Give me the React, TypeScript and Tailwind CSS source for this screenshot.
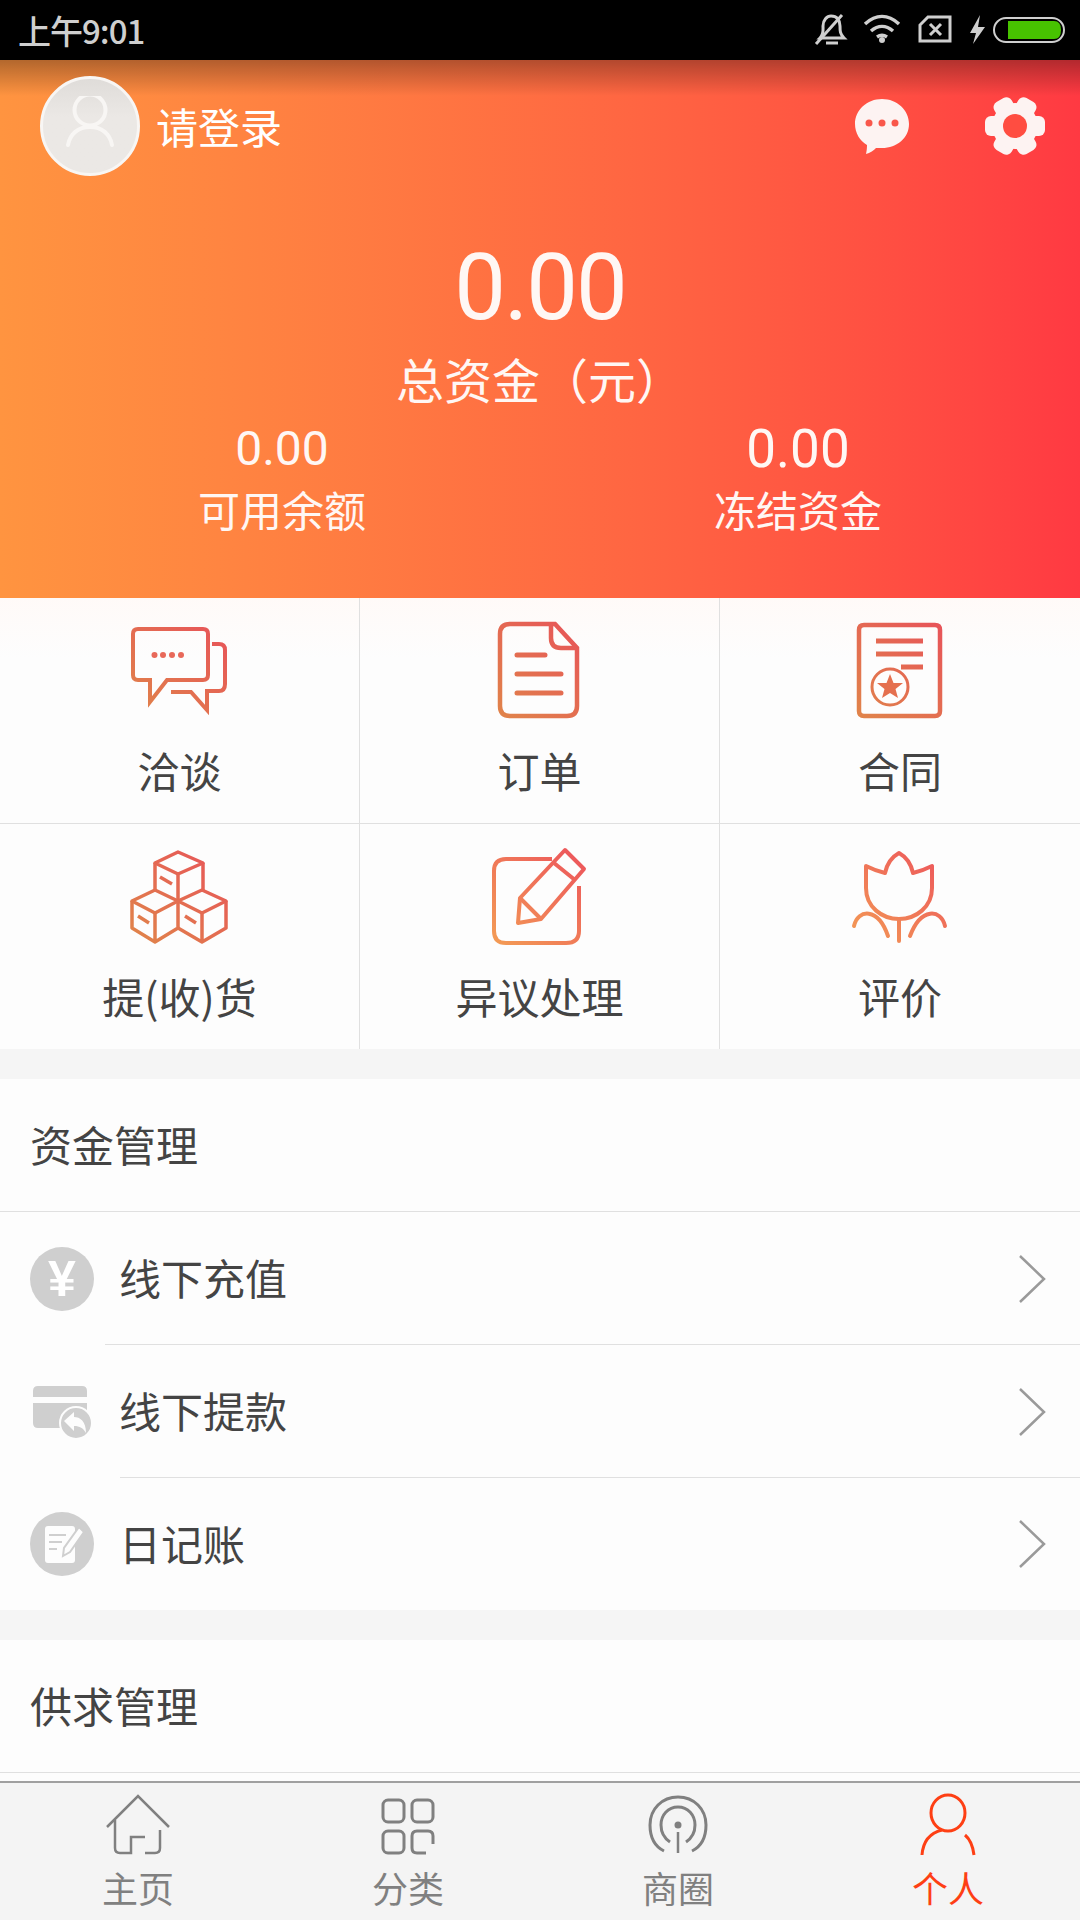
import type { ReactNode } from "react";

function GradIcon({ id, box, from = "#e0844a", to = "#e8505a", children }: { id: string; box: [number, number]; from?: string; to?: string; children: ReactNode }) {
  const [x, y] = box;
  return (
    <svg width="110" height="110" viewBox={`${x} ${y} 110 110`} fill="none" stroke={`url(#${id})`} strokeWidth="4">
      <defs>
        <linearGradient id={id} gradientUnits="userSpaceOnUse" x1={x + 10} y1={y + 105} x2={x + 100} y2={y + 5}>
          <stop offset="0" stopColor={from} />
          <stop offset="1" stopColor={to} />
        </linearGradient>
      </defs>
      {children}
    </svg>
  );
}

const cells = [
  {
    label: "洽谈",
    icon: (
      <GradIcon id="g1" box={[125, 610]}>
        <path d="M150 680H138Q133 680 133 675V634Q133 629 138 629H203Q208 629 208 634V675Q208 680 203 680H167L150 702Z" />
        <path d="M212 644H219Q225 644 225 650V684Q225 691 219 691H207V710L191 692H171" />
        <g fill="#e8695a" stroke="none">
          <circle cx="154.500" cy="655" r="3" />
          <circle cx="163" cy="655" r="3" />
          <circle cx="172" cy="655" r="3" />
          <circle cx="181" cy="655" r="3" />
        </g>
      </GradIcon>
    ),
  },
  {
    label: "订单",
    icon: (
      <GradIcon id="g2" box={[485, 610]}>
        <path d="M555 624H510Q500 624 500 634V706Q500 716 510 716H567Q577 716 577 706V648Z" strokeWidth="4.500" />
        <path d="M551 624V638Q551 648 561 648H577" strokeWidth="4.500" />
        <path d="M517 655H545M517 674H561M517 693H561" strokeWidth="5" strokeLinecap="round" />
      </GradIcon>
    ),
  },
  {
    label: "合同",
    icon: (
      <GradIcon id="g3" box={[845, 610]}>
        <path d="M864 625H935Q940 625 940 630V711Q940 716 935 716H864Q859 716 859 711V630Q859 625 864 625Z" strokeWidth="4.500" />
        <path d="M876 641H923M876 654H923M901 667H923" strokeWidth="5" />
        <circle cx="890" cy="687" r="18" strokeWidth="3" fill="#fefdfc" />
        <path d="M890 674L893.500 683H903L895.500 689L898 698L890 693L882 698L884.500 689L877 683H886.500Z" fill="#e5704e" stroke="none" />
      </GradIcon>
    ),
  },
  {
    label: "提(收)货",
    icon: (
      <GradIcon id="g4" box={[125, 835]}>
        <g strokeWidth="3.500" strokeLinejoin="round">
          <path d="M178 851L203 862L178 873L155 862Z" />
          <path d="M155 862V889M203 862V889M178 873V900" />
          <path d="M155 889L178 900L155 912L132 900Z" />
          <path d="M132 900V927L155 941L178 927V900M155 912V941" />
          <path d="M202 889L226 900L202 912L178 900Z" />
          <path d="M226 900V927L202 941L178 927M202 912V941" />
          <path d="M160 876L172 883M138 915L149 922M185 915L196 922" />
        </g>
      </GradIcon>
    ),
  },
  {
    label: "异议处理",
    icon: (
      <GradIcon id="g5" box={[485, 835]} from="#f39a55" to="#ec4f5c">
        <path d="M552 858H506Q494 858 494 870V930Q494 942 506 942H566Q579 942 579 930V885" />
        <path d="M565 849L584 868L541 918L518 922L520 897Z" strokeLinejoin="round" />
        <path d="M520 897L541 918M554 862L575 879" />
      </GradIcon>
    ),
  },
  {
    label: "评价",
    icon: (
      <GradIcon id="g6" box={[845, 835]} from="#f39a55" to="#ec4f5c">
        <path d="M899 852Q910 858 913 872Q922 870 932 865V887C932 906 916 918 899 918C882 918 866 906 866 887V865Q876 870 885 872Q888 858 899 852Z" strokeLinejoin="round" />
        <path d="M899 918V940M854 925C858 908 878 906 888 935M945 925C941 908 921 906 910 935" strokeLinecap="round" />
      </GradIcon>
    ),
  },
];

function Chevron() {
  return (
    <svg width="28" height="50" viewBox="0 0 28 50" fill="none" stroke="#9a9a9a" strokeWidth="2.500" className="ml-auto mr-[34px]">
      <path d="M2 2L26 25L2 48" />
    </svg>
  );
}

function FinanceRow({ label, icon, divider }: { label: string; icon: ReactNode; divider?: string }) {
  return (
    <div className={divider ? "relative flex h-[133px] items-center bg-[#fdfdfd]" : "relative flex h-[132px] items-center bg-[#fdfdfd]"}>
      <div className="flex w-[119px] justify-center pl-[5px]">{icon}</div>
      <span className="mb-[3px] text-[42px] leading-[48px] text-[#444]">{label}</span>
      <Chevron />
      {divider && <div className={divider} />}
    </div>
  );
}

function Tab({ label, active, children }: { label: string; active?: boolean; children: ReactNode }) {
  return (
    <div className="flex w-[270px] flex-col items-center pl-[6px] pt-[10px]">
      {children}
      <span className={active ? "mt-[8px] text-[36px] leading-[44px] text-[#fe3f14]" : "mt-[8px] text-[36px] leading-[44px] text-[#808080]"}>{label}</span>
    </div>
  );
}

export default function App() {
  return (
    <div className="flex h-[1920px] w-[1080px] flex-col overflow-hidden bg-[#f5f5f5] font-['Noto_Sans_CJK_SC',sans-serif]">
      {/* status bar */}
      <div className="flex h-[60px] shrink-0 items-center bg-black pl-[18px] pr-[15px] text-[#cfcfcf]">
        <span className="text-[33px] leading-[40px] font-medium tracking-[-1px]">上午9:01</span>
        <svg width="252" height="40" viewBox="813 10 252 40" fill="none" stroke="#cfcfcf" strokeWidth="3" className="ml-auto">
          <path d="M820 38C824 34 823 30 823 26C823 20 827 16 831 16C837 16 840 20 840 26C840 31 840 34 844 38H820Z" />
          <path d="M816 44L842 15" />
          <path d="M826 43H838" />
          <path d="M865 24C876 14 888 14 899 24M871 31C878 25 886 25 893 31M877 37C880 35 884 35 887 37" strokeWidth="3.500" />
          <circle cx="882" cy="40" r="3" fill="#cfcfcf" stroke="none" />
          <path d="M928 17H950V41H920V25Z" />
          <path d="M930 24L941 35M941 24L930 35" strokeWidth="3" />
          <path d="M980 15L970 33H976L973 44L985 27H978Z" fill="#cfcfcf" stroke="none" />
          <rect x="994" y="18" width="70" height="24" rx="12" strokeWidth="2" />
          <path d="M1008 21H1054Q1061 21 1061 30Q1061 39 1054 39H1008Z" fill="#47c300" stroke="none" />
        </svg>
      </div>

      {/* wallet header */}
      <div className="relative h-[538px] shrink-0 bg-gradient-to-r from-[#ff9440] to-[#ff3942] text-[#fff7f4]">
        <div className="absolute inset-x-0 top-0 h-[36px] bg-gradient-to-b from-black/30 to-transparent" />
        <div className="relative flex items-center pl-[40px] pr-[34px] pt-[16px]">
          <div className="flex size-[100px] items-center justify-center rounded-full border-[3px] border-[#f8f6f4] bg-gradient-to-b from-[#dfdcd9] to-[#ebe8e5] to-40%">
            <svg width="60" height="60" viewBox="60 96 60 60" fill="none" stroke="#f8f6f4" strokeWidth="4">
              <circle cx="90" cy="110" r="15.500" />
              <path d="M68 145C70 134 78 127 90 127C102 127 110 134 112 145" strokeLinecap="round" />
            </svg>
          </div>
          <span className="ml-[16px] text-[42px] leading-[48px] text-white">请登录</span>
          <svg width="56" height="56" viewBox="854 98 56 56" className="ml-auto">
            <path d="M882 99C897 99 909 110 909 124C909 138 897 148 882 148H876C874 150 870 153 866 154C867 150 867 146 867 145C860 141 855 133 855 124C855 110 867 99 882 99Z" fill="#fdf3f2" />
            <circle cx="869" cy="123" r="3.500" fill="#f9574b" />
            <circle cx="882" cy="123" r="3.500" fill="#f9574b" />
            <circle cx="895" cy="123" r="3.500" fill="#f9574b" />
          </svg>
          <svg width="62" height="62" viewBox="983 96 62 62" className="ml-[74px]" fill="#fdf3f2">
            <g transform="translate(1014 127)">
              <rect x="-10" y="-30" width="20" height="60" rx="6" transform="rotate(30)" />
              <rect x="-10" y="-30" width="20" height="60" rx="6" transform="rotate(90)" />
              <rect x="-10" y="-30" width="20" height="60" rx="6" transform="rotate(150)" />
              <circle r="23" />
              <circle r="12" fill="#ff4d41" />
            </g>
          </svg>
        </div>
        <div className="relative mt-[62px] text-center text-[92px] leading-[100px] tracking-[-2px] font-['Roboto',sans-serif]">0.00</div>
        <div className="relative mt-[15px] text-center text-[48px] leading-[50px]">总资金（元）</div>
        <div className="relative mt-[18px] grid grid-cols-2 px-[24px] text-center">
          <div>
            <div className="text-[48px] leading-[56px] font-['Roboto',sans-serif]">0.00</div>
            <div className="mt-[10px] text-[42px] leading-[44px]">可用余额</div>
          </div>
          <div>
            <div className="text-[53px] leading-[56px] font-['Roboto',sans-serif]">0.00</div>
            <div className="mt-[10px] text-[42px] leading-[44px]">冻结资金</div>
          </div>
        </div>
      </div>

      {/* shortcuts */}
      <div className="grid h-[451px] shrink-0 grid-cols-[360px_360px_360px] grid-rows-[226px_225px] bg-[#fdfdfd]">
        {cells.map((c, i) => (
          <div
            key={c.label}
            className={`flex flex-col items-center pt-[12px] ${i % 3 < 2 ? "border-r border-[#e0e0e0]" : ""} ${i < 3 ? "border-b border-[#e0e0e0] bg-[linear-gradient(#fffaf8,#fdfdfd_60px)]" : ""}`}
          >
            {c.icon}
            <span className="mt-[28px] text-[42px] leading-[44px] text-[#444]">{c.label}</span>
          </div>
        ))}
      </div>

      {/* funds */}
      <div className="mt-[30px] shrink-0 bg-[#fdfdfd]">
        <div className="flex h-[133px] items-center border-b border-[#e0e0e0] pb-[2px] pl-[30px] text-[42px] leading-[48px] text-[#444]">资金管理</div>
        <FinanceRow
          label="线下充值"
          divider="absolute bottom-0 left-[105px] right-0 h-px bg-[#e0e0e0]"
          icon={
            <div className="flex size-[64px] items-center justify-center rounded-full bg-[#cfcfcf] font-['Liberation_Sans',sans-serif] text-[50px] leading-none font-bold text-white">¥</div>
          }
        />
        <FinanceRow
          label="线下提款"
          divider="absolute bottom-0 left-[120px] right-0 h-px bg-[#e0e0e0]"
          icon={
            <svg width="64" height="64" viewBox="30 1379 64 64">
              <path d="M38 1385H82Q87 1385 87 1390V1396H33V1390Q33 1385 38 1385ZM33 1402H87V1422Q87 1427 82 1427H38Q33 1427 33 1422Z" fill="#cfcfcf" />
              <circle cx="76" cy="1422" r="16" fill="#cfcfcf" stroke="#fdfdfd" strokeWidth="2" />
              <path d="M64 1420L74 1411V1416C80 1416 86 1420 86 1432C83 1427 80 1425 74 1425V1430Z" fill="#fdfdfd" />
            </svg>
          }
        />
        <FinanceRow
          label="日记账"
          icon={
            <svg width="66" height="66" viewBox="29 1511 66 66">
              <circle cx="62" cy="1544" r="32" fill="#cfcfcf" />
              <rect x="45" y="1526" width="30" height="37" rx="3" fill="#fdfdfd" />
              <path d="M49 1535H66M49 1542H62M49 1549H57" stroke="#cfcfcf" strokeWidth="2" />
              <path d="M79 1527L84 1532L70 1552L63 1556L64 1548Z" fill="#fdfdfd" stroke="#cfcfcf" strokeWidth="2" />
            </svg>
          }
        />
      </div>

      {/* supply */}
      <div className="mt-[30px] flex h-[141px] shrink-0 flex-col bg-[#fdfdfd]">
        <div className="flex h-[133px] shrink-0 items-center border-b border-[#e0e0e0] pb-[2px] pl-[30px] text-[42px] leading-[48px] text-[#444]">供求管理</div>
      </div>

      {/* tab bar */}
      <div className="flex h-[139px] shrink-0 border-t-2 border-[#a0a0a0] bg-[#f4f4f4]">
        <Tab label="主页">
          <svg width="70" height="64" viewBox="103 1791 70 64" fill="none" stroke="#808080" strokeWidth="2.500">
            <path d="M107 1825L138 1794L169 1825" />
            <path d="M115 1818V1846Q115 1851 120 1851H131V1835H145M160 1828V1846Q160 1851 155 1851H145" />
          </svg>
        </Tab>
        <Tab label="分类">
          <svg width="70" height="64" viewBox="375 1791 70 64" fill="none" stroke="#808080" strokeWidth="3">
            <rect x="385" y="1798" width="21" height="22" rx="5" />
            <rect x="414" y="1798" width="21" height="22" rx="5" />
            <rect x="385" y="1829" width="21" height="22" rx="5" />
            <path d="M435 1842V1834Q435 1829 430 1829H419Q414 1829 414 1834V1846Q414 1851 419 1851H428" />
          </svg>
        </Tab>
        <Tab label="商圈">
          <svg width="70" height="64" viewBox="643 1791 70 64" fill="none" stroke="#808080" strokeWidth="3">
            <path d="M664 1849C654 1844 650 1834 650 1823C650 1807 662 1795 678 1795C694 1795 706 1807 706 1823C706 1834 702 1844 692 1849" />
            <path d="M670 1840C664 1836 661 1830 661 1823C661 1813 668 1805 678 1805C688 1805 695 1813 695 1823C695 1830 692 1836 686 1840" />
            <circle cx="678" cy="1823" r="3.500" fill="#808080" stroke="none" />
            <path d="M678 1830V1851" strokeWidth="2.500" />
          </svg>
        </Tab>
        <Tab label="个人" active>
          <svg width="70" height="64" viewBox="913 1791 70 64" fill="none" stroke="#fe3f14" strokeWidth="3">
            <ellipse cx="948" cy="1811" rx="17" ry="18" />
            <path d="M942 1828C930 1831 923 1840 922 1853M965 1833C971 1838 973 1845 974 1853" />
          </svg>
        </Tab>
      </div>
    </div>
  );
}
